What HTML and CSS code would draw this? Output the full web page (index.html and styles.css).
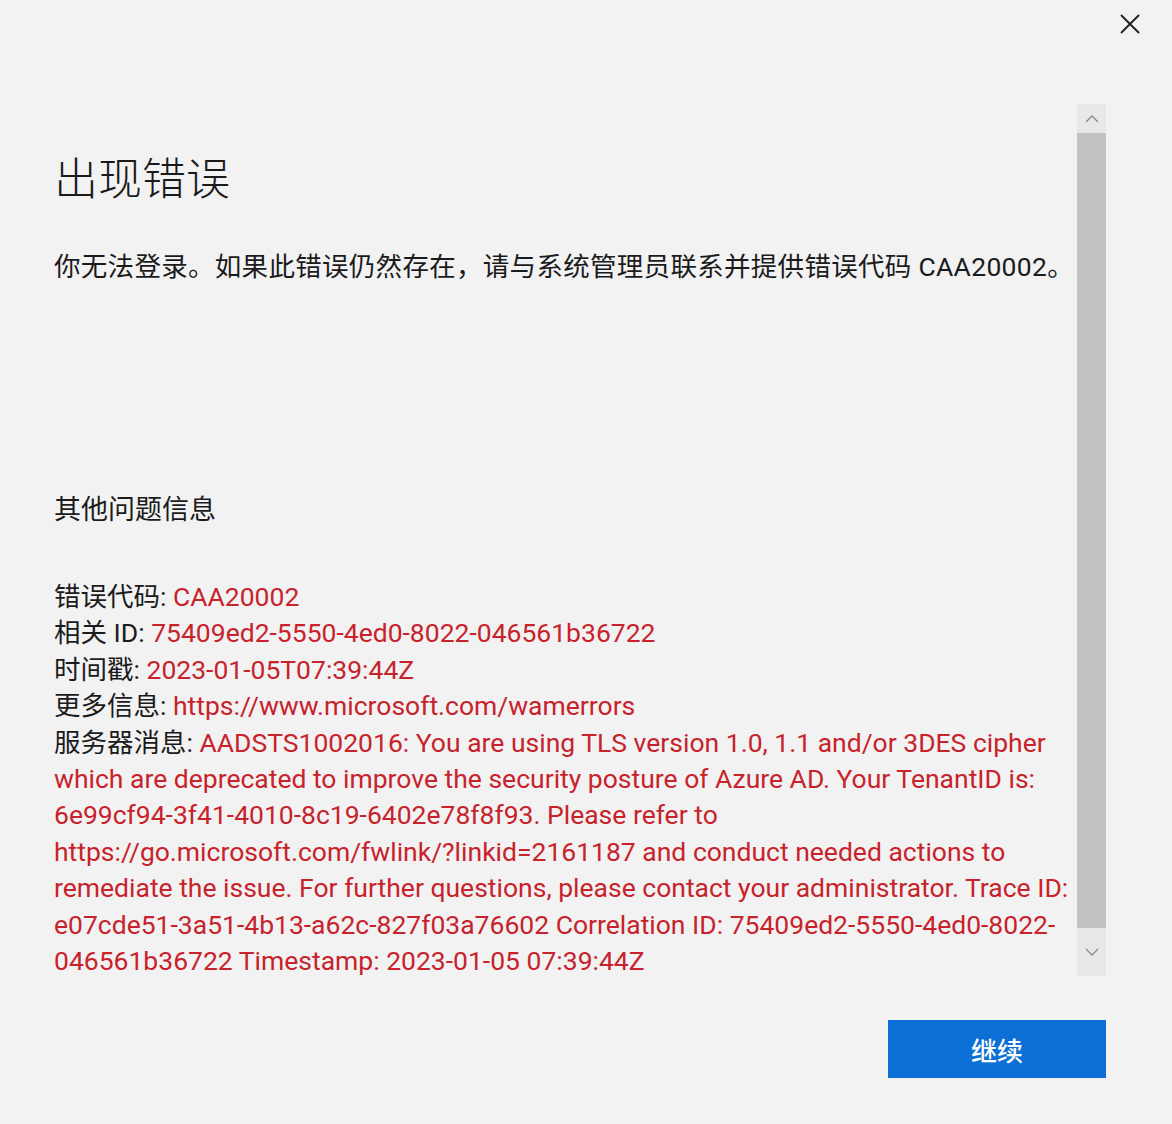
FILE: index.html
```html
<!DOCTYPE html>
<html lang="zh-CN">
<head>
<meta charset="utf-8">
<title>出现错误</title>
<link rel="stylesheet" href="styles.css">
</head>
<body>
<div class="window">
  <div class="titlebar">
    <button class="close" aria-label="关闭">
      <svg width="20" height="20" viewBox="0 0 20 20"><path d="M1 1 L19 19 M19 1 L1 19" stroke="#1f1f1f" stroke-width="1.8" fill="none"/></svg>
    </button>
  </div>
  <div class="main">
    <div class="content">
      <h1 class="title">出现错误</h1>
      <p class="lead">你无法登录。如果此错误仍然存在，请与系统管理员联系并提供错误代码 CAA20002。</p>
      <h2 class="subhead">其他问题信息</h2>
      <div class="details">
        <p class="row"><span class="label">错误代码:</span> <span class="val">CAA20002</span></p>
        <p class="row"><span class="label">相关 ID:</span> <span class="val">75409ed2-5550-4ed0-8022-046561b36722</span></p>
        <p class="row"><span class="label">时间戳:</span> <span class="val">2023-01-05T07:39:44Z</span></p>
        <p class="row"><span class="label">更多信息:</span> <span class="val">https://www.microsoft.com/wamerrors</span></p>
        <p class="row"><span class="label">服务器消息:</span> <span class="val">AADSTS1002016: You are using TLS version 1.0, 1.1 and/or 3DES cipher which are deprecated to improve the security posture of Azure AD. Your TenantID is: 6e99cf94-3f41-4010-8c19-6402e78f8f93. Please refer to https://go.microsoft.com/fwlink/?linkid=2161187 and conduct needed actions to remediate the issue. For further questions, please contact your administrator. Trace ID: e07cde51-3a51-4b13-a62c-827f03a76602 Correlation ID: 75409ed2-5550-4ed0-8022-046561b36722 Timestamp: 2023-01-05 07:39:44Z</span></p>
      </div>
    </div>
    <div class="scrollbar">
      <div class="arrow">
        <svg width="14" height="8" viewBox="0 0 14 8"><path d="M1 7 L7 1 L13 7" stroke="#8a8a8a" stroke-width="1.3" fill="none"/></svg>
      </div>
      <div class="thumb"></div>
      <div class="arrow down">
        <svg width="14" height="8" viewBox="0 0 14 8"><path d="M1 1 L7 7 L13 1" stroke="#8a8a8a" stroke-width="1.3" fill="none"/></svg>
      </div>
    </div>
  </div>
  <div class="footer">
    <button class="primary">继续</button>
  </div>
</div>
</body>
</html>
```

FILE: styles.css
```css
html, body {
  margin: 0;
  padding: 0;
  background: #f2f2f3;
}

body {
  font-family: Roboto, "Noto Sans CJK SC", sans-serif;
  color: #1b1b1b;
}

.window {
  width: 1172px;
  height: 1124px;
  display: flex;
  flex-direction: column;
}

.titlebar {
  height: 104px;
  display: flex;
  justify-content: flex-end;
  align-items: flex-start;
}

.close {
  margin: 14px 32px 0 0;
  width: 20px;
  height: 20px;
  padding: 0;
  border: 0;
  background: transparent;
  display: block;
}

.close svg {
  display: block;
}

.main {
  height: 872px;
  margin-left: 54px;
  width: 1052px;
  display: flex;
}

.content {
  flex: 1;
  overflow: hidden;
}

.title {
  margin: 46px 0 0 0;
  font-family: "Noto Sans CJK SC", sans-serif;
  font-weight: 300;
  font-size: 44px;
  line-height: 52px;
  color: #1a1a1a;
}

.lead {
  margin: 49px 0 0 0;
  font-size: 26.5px;
  line-height: 32px;
  letter-spacing: 0.3px;
  white-space: nowrap;
  font-family: Roboto, "Noto Sans CJK SC", sans-serif;
}

.subhead {
  margin: 209px 0 0 0;
  font-size: 27px;
  line-height: 32px;
  font-weight: 400;
  font-family: "Noto Sans CJK SC", sans-serif;
}

.details {
  margin-top: 55px;
  font-size: 26.5px;
  line-height: 36.4px;
}

.row {
  margin: 0;
}

.val {
  color: #c8222b;
}

.scrollbar {
  width: 29px;
  background: #e8e8e9;
  display: flex;
  flex-direction: column;
}

.arrow {
  height: 29px;
  display: flex;
  align-items: center;
  justify-content: center;
}

.arrow.down {
  height: 48px;
}

.thumb {
  flex: 1;
  background: #c2c2c2;
}

.footer {
  display: flex;
  justify-content: flex-end;
  padding: 44px 66px 0 0;
}

.primary {
  width: 218px;
  height: 58px;
  border: 0;
  background: #0b6fd6;
  color: #ffffff;
  font-family: "Noto Sans CJK SC", sans-serif;
  font-size: 26px;
  font-weight: 500;
  padding: 0;
}
```
